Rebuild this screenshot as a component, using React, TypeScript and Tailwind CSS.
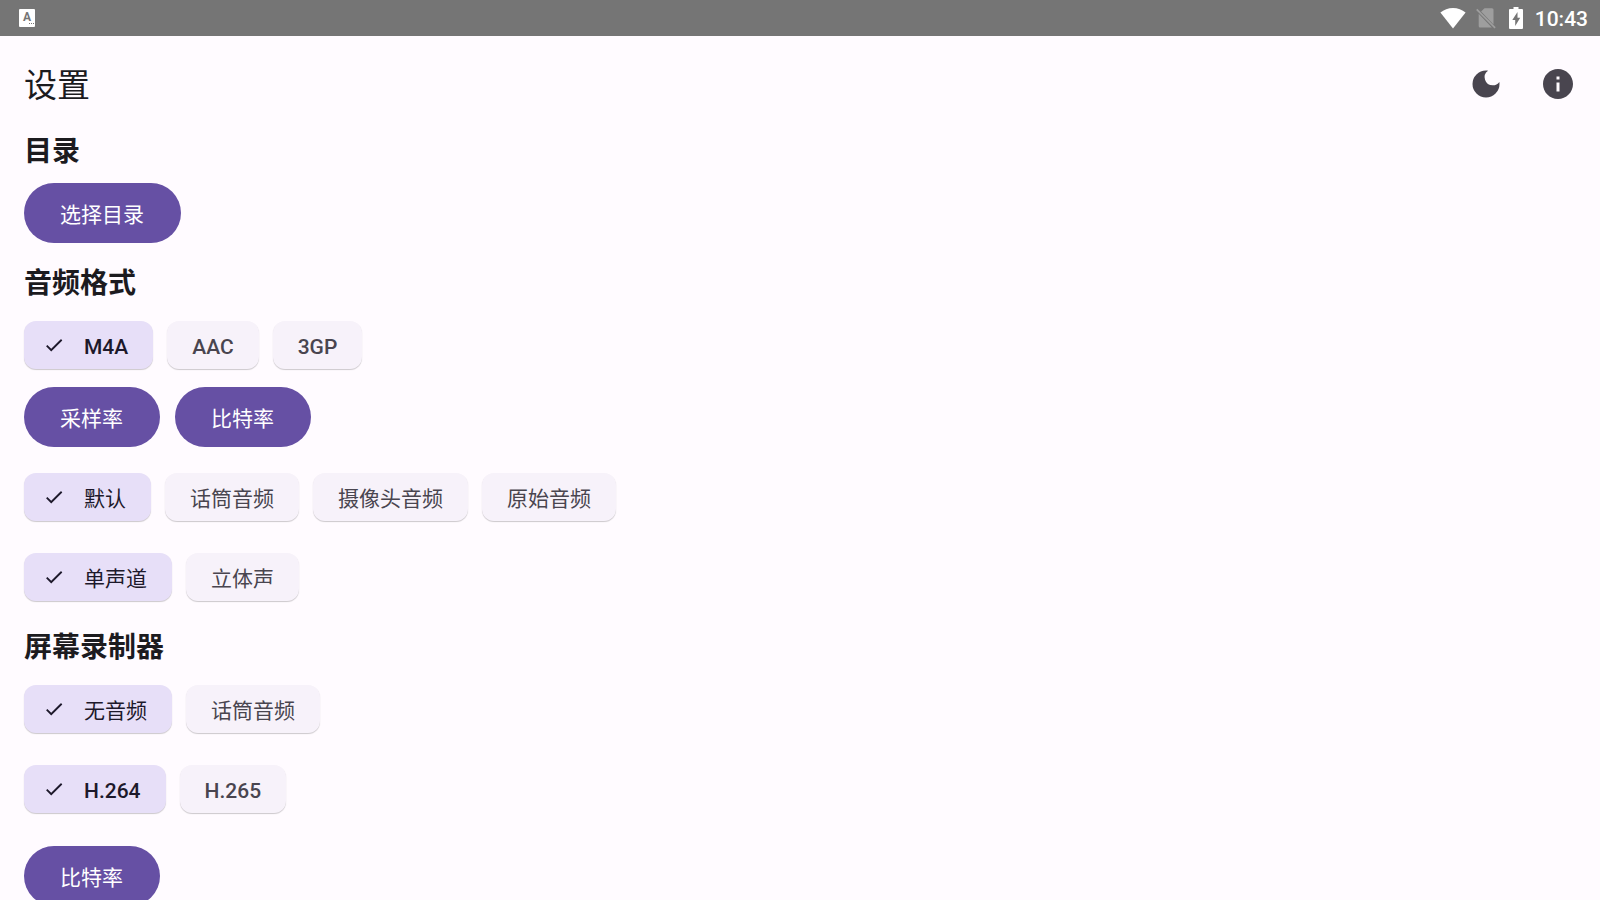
import React, { useState } from 'react';
import clsx from 'clsx';
import { MdDarkMode, MdInfo } from 'react-icons/md';

interface ChipGroupProps {
  name: string;
  label: string;
  options: string[];
  latin?: boolean;
}

const ChipGroup: React.FC<ChipGroupProps> = ({ name, label, options, latin }) => {
  const [selected, setSelected] = useState(options[0]);

  return (
    <div role="radiogroup" aria-label={label} className="flex flex-wrap gap-3.5 py-4">
      {options.map(option => {
        const isSelected = option === selected;
        return (
          <label
            key={option}
            className={clsx(
              'relative flex h-12 cursor-pointer items-center rounded-xl pr-[25px] text-[21px] leading-8 shadow-[0_1px_1px_rgba(0,0,0,0.2)]',
              latin ? 'font-medium' : 'font-normal',
              isSelected ? 'gap-[18px] bg-[#e7dff8] pl-[18px] text-[#1d192b]' : 'bg-[#f7f2fa] pl-[25px] text-[#49454f]'
            )}
          >
            <input
              type="radio"
              name={name}
              value={option}
              checked={isSelected}
              onChange={() => setSelected(option)}
              className="sr-only"
            />
            {isSelected && (
              <svg viewBox="-1 -1 26 26" className="size-6" fill="currentColor" aria-hidden="true">
                <path d="M9 16.17 4.83 12l-1.42 1.41L9 19 21 7l-1.41-1.41z" />
              </svg>
            )}
            <span className="pt-[3px]">{option}</span>
          </label>
        );
      })}
    </div>
  );
};

const PillButton: React.FC<{ children: React.ReactNode }> = ({ children }) => (
  <button type="button" className="h-15 cursor-pointer rounded-full bg-[#6650a4] pt-1 pr-[37px] pl-9 text-[21px] leading-8 font-normal text-white">
    {children}
  </button>
);

const SectionTitle: React.FC<{ children: React.ReactNode }> = ({ children }) => (
  <h2 className="pt-0.5 text-[28px] leading-9 font-bold text-[#1c1b1f]">{children}</h2>
);

const StatusBar: React.FC = () => (
  <div className="flex h-9 shrink-0 items-center justify-between bg-[#757575] pr-3 pl-[19px] text-white">
    {/* KEYBOARD NOTIFICATION */}
    <div className="flex h-[18px] w-4 flex-col items-center rounded-[1px] bg-white text-[#757575]">
      <span className="pt-0.5 text-[12px] leading-3 font-bold">A</span>
      <div className="flex w-full justify-end gap-px pr-px">
        <i className="size-px bg-current" />
        <i className="size-px bg-current" />
        <i className="size-px bg-current" />
      </div>
    </div>

    <div className="flex items-center">
      {/* WIFI */}
      <svg viewBox="0 0 26 22" className="mr-2.5 h-[22px] w-[26px]" fill="currentColor" aria-hidden="true">
        <path d="M13 21.5.4 5.6C3.8 2.5 8.2.9 13 .9s9.2 1.6 12.6 4.7z" />
      </svg>
      {/* NO SIM */}
      <svg viewBox="0 0 20 22" className="mr-[13px] h-[22px] w-5 text-[#9e9e9e]" fill="currentColor" aria-hidden="true">
        <path d="M8.5 1.2H16a1.5 1.5 0 0 1 1.5 1.5v14.7L5.1 4.6z" />
        <path d="M2.7 6.7 15.8 20.5H4.2A1.5 1.5 0 0 1 2.7 19z" />
        <path d="M.1 2.900 1.300 1.700 19.700 20.300l-1.200 1.200z" />
      </svg>
      {/* BATTERY */}
      <svg viewBox="0 0 14 22" className="mr-3 h-[22px] w-3.5" aria-hidden="true">
        <path d="M4.5 0h5v2H13a1 1 0 0 1 1 1v18a1 1 0 0 1-1 1H1a1 1 0 0 1-1-1V3a1 1 0 0 1 1-1h3.5z" fill="currentColor" />
        <path d="M8.5 5 3.3 13h2.9v6l5-8.3H8.500z" fill="#757575" />
      </svg>
      <span className="pt-0.5 text-[21px] leading-8 font-medium">10:43</span>
    </div>
  </div>
);

export default function App() {
  return (
    <div className="flex h-screen flex-col overflow-hidden bg-[#fffbff] font-['Roboto','Noto_Sans_CJK_SC',sans-serif] text-[#1c1b1f]">
      <StatusBar />

      <header className="flex h-24 shrink-0 items-center justify-between pr-1.5 pl-6">
        <h1 className="pt-1 text-[33px] leading-10 font-normal">设置</h1>
        <div className="flex text-[#49454f]">
          <button type="button" aria-label="深色主题" className="flex size-[72px] cursor-pointer items-center justify-center">
            <MdDarkMode className="size-9" />
          </button>
          <button type="button" aria-label="关于" className="flex size-[72px] cursor-pointer items-center justify-center">
            <MdInfo className="size-9" />
          </button>
        </div>
      </header>

      <main className="min-h-0 flex-1 overflow-y-auto px-6 [scrollbar-width:none]">
        <section>
          <SectionTitle>目录</SectionTitle>
          <div className="flex pt-[13px] pb-[21px]">
            <PillButton>选择目录</PillButton>
          </div>
        </section>

        <section>
          <SectionTitle>音频格式</SectionTitle>
          <div className="pt-[3px]">
            <ChipGroup name="audio-format" label="音频格式" options={['M4A', 'AAC', '3GP']} latin />
          </div>
          <div className="flex gap-[15px] pt-0.5 pb-2.5">
            <PillButton>采样率</PillButton>
            <PillButton>比特率</PillButton>
          </div>
          <ChipGroup name="audio-source" label="音频来源" options={['默认', '话筒音频', '摄像头音频', '原始音频']} />
          <ChipGroup name="audio-channels" label="声道" options={['单声道', '立体声']} />
        </section>

        <section className="pt-[11px]">
          <SectionTitle>屏幕录制器</SectionTitle>
          <div className="pt-[3px]">
            <ChipGroup name="screen-audio" label="录屏音频" options={['无音频', '话筒音频']} />
          </div>
          <ChipGroup name="video-codec" label="视频编码" options={['H.264', 'H.265']} latin />
          <div className="flex pt-[17px] pb-6">
            <PillButton>比特率</PillButton>
          </div>
        </section>
      </main>
    </div>
  );
}
